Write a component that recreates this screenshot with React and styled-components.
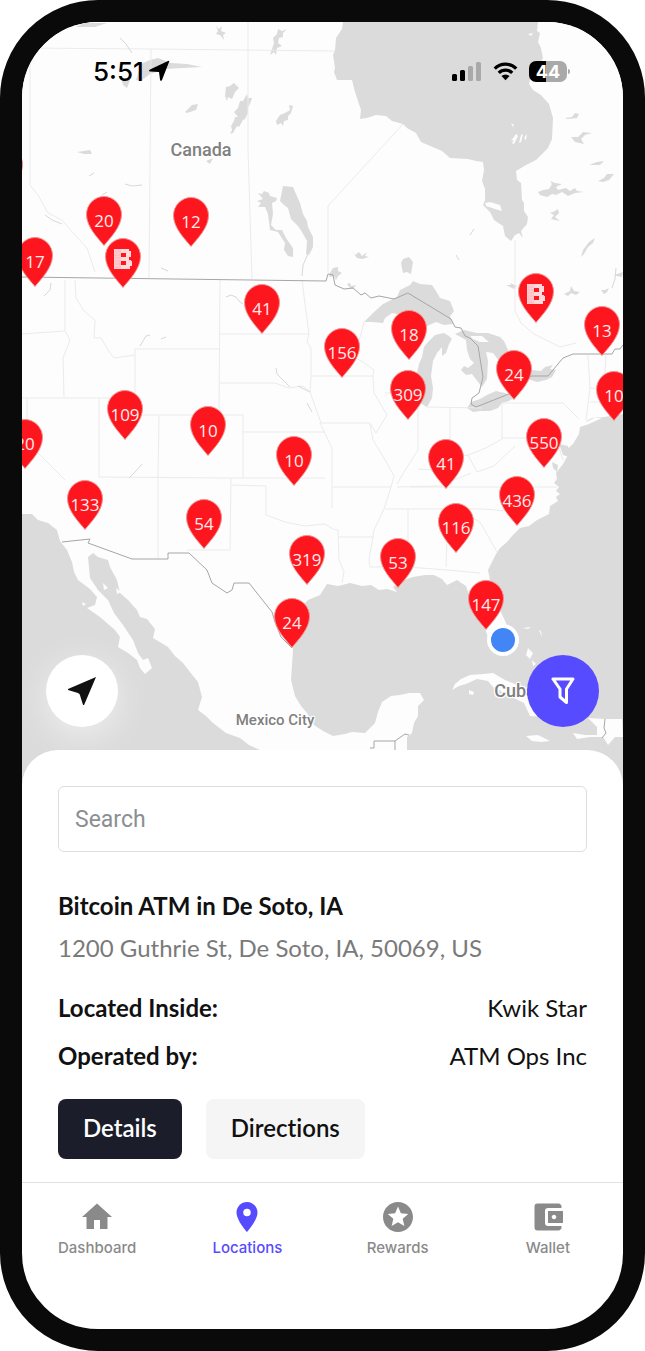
import styled, { createGlobalStyle, css } from "styled-components";
import { MdHome, MdLocationOn, MdStars, MdAccountBalanceWallet } from "react-icons/md";

const MAP = { x: 22, y: 22, width: 601, height: 762 };

// x is the middle of the pin, y is its tip
const pins = [
    { x: 5, y: 196, label: "" },
    { x: 104, y: 246, label: "20" },
    { x: 191, y: 247, label: "12" },
    { x: 35, y: 287, label: "17" },
    { x: 123, y: 288, logo: true },
    { x: 262, y: 334, label: "41" },
    { x: 536, y: 323, logo: true },
    { x: 409, y: 360, label: "18" },
    { x: 602, y: 356, label: "13" },
    { x: 342, y: 378, label: "156" },
    { x: 514, y: 400, label: "24" },
    { x: 408, y: 420, label: "309" },
    { x: 614, y: 421, label: "10" },
    { x: 125, y: 440, label: "109" },
    { x: 208, y: 456, label: "10" },
    { x: 25, y: 469, label: "20" },
    { x: 544, y: 468, label: "550" },
    { x: 294, y: 486, label: "10" },
    { x: 446, y: 489, label: "41" },
    { x: 517, y: 526, label: "436" },
    { x: 85, y: 530, label: "133" },
    { x: 204, y: 549, label: "54" },
    { x: 456, y: 553, label: "116" },
    { x: 307, y: 585, label: "319" },
    { x: 398, y: 588, label: "53" },
    { x: 486, y: 630, label: "147" },
    { x: 292, y: 648, label: "24" },
];

const places = [
    { name: "Canada", x: 201, y: 149, size: 18 },
    { name: "Mexico City", x: 275, y: 720, size: 15 },
    { name: "Cuba", x: 515, y: 690, size: 18 },
];

const tabs = [
    { name: "Dashboard", Icon: MdHome },
    { name: "Locations", Icon: MdLocationOn, active: true },
    { name: "Rewards", Icon: MdStars },
    { name: "Wallet", Icon: MdAccountBalanceWallet },
];

const water = [
    // Hudson Bay and James Bay
    "M343 22 342 29 336 38 335 50 333 55 335 68 334 72 337 80 352 80 355 92 361 110 360 119 367 118 376 115 386 116 392 121 403 124 407 128 416 133 421 142 435 148 442 151 450 158 468 159 476 161 483 162 484 170 482 181 485 189 485 200 483 205 490 212 494 220 503 226 505 236 511 241 515 235 519 233 523 238 521 231 527 224 528 217 524 211 524 203 522 200 521 183 517 180 516 171 526 165 536 160 548 148 552 139 553 118 549 104 541 95 533 90 529 84 531 74 539 66 543 58 541 48 538 42 540 33 537 31 538 22Z",
    // Great Lakes
    "M364 322 373 313 383 304 397 297 400 290 410 285 413 281 420 284 432 285 436 291 440 298 450 301 454 311 450 316 453 324 444 325 436 322 427 326 420 320 408 316 392 313 385 318 383 323 372 322Z",
    "M449 336 444 333 435 335 428 342 424 347 422 357 419 364 417 373 417 388 420 403 427 407 432 398 433 388 431 376 433 361 437 353 442 347 442 356 446 353 449 344 452 339Z",
    "M455 334 466 340 467 350 470 359 474 363 468 368 464 366 461 370 466 375 472 374 478 382 482 387 487 379 488 361 486 352 493 353 499 361 508 365 514 359 508 350 504 341 500 337 488 333 477 333 464 330Z",
    "M467 408 471 402 480 399 487 395 496 391 505 393 515 397 509 401 502 403 498 408 490 411 480 411 473 412Z",
    "M531 370 541 371 545 367 553 365 550 369 556 370 552 377 546 380 537 382 528 379Z",
    // Manitoba
    "M283 186 293 187 296 194 300 203 303 214 307 221 308 227 313 237 313 247 309 255 306 254 307 241 302 232 298 226 291 219 288 208 284 205 280 201Z",
    "M258 193 262 194 264 191 269 193 270 196 277 198 276 201 272 203 273 214 271 225 276 230 282 230 286 238 293 248 293 257 288 256 284 250 285 243 278 232 270 230 268 214 265 207 258 207 261 203 257 201 263 199Z",
    // northern lakes
    "M141 64 150 60 158 58 171 63 187 64 202 67 183 68 165 69 150 74 141 81 136 80Z",
    "M76 27 84 23 107 23 95 27Z M122 81 130 80 127 88 123 85Z M77 152 90 150 92 154 84 154Z M185 112 192 105 198 104 196 110 187 113Z M206 161 213 158 210 164Z",
    "M226 87 230 86 234 83 239 88 235 92 232 99 228 97 227 101 225 96Z M247 94 248 98 252 98 250 104 248 107 248 113 245 119 243 120 239 127 237 126 233 133 230 134 232 130 231 126 234 121 235 117 238 117 234 112 238 108 240 101 243 101Z",
    "M276 121 280 115 285 113 290 110 289 105 293 106 291 113 288 116 288 120 284 121 283 126 281 123 277 125Z M216 26 219 29 222 26 221 31 226 33 223 35 224 40 220 35 216 34 218 31Z",
    "M270 55 274 43 273 38 277 34 278 29 282 31 287 29 283 33 283 37 279 38 278 43 282 46 277 48 276 55 274 52Z",
    "M401 263 403 259 409 257 413 262 411 274 407 272 403 273Z M330 273 333 268 338 267 338 271 342 273 338 276 336 280 334 276 329 277Z M351 250 355 255 359 252 362 256 367 252 365 256 369 257 362 259 357 258Z M347 284 350 283 351 286 356 285 353 289 350 288Z",
    "M565 118 572 117 575 113 579 114 577 118 567 119Z M571 137 578 137 583 132 592 133 585 135 581 139 584 144 575 142Z M589 165 597 162 604 161 600 165Z M598 181 604 178 607 174 614 174 609 180 603 182Z",
    "M538 192 543 190 549 189 552 184 550 181 555 183 562 184 556 187 558 190 566 188 570 191 575 188 577 191 584 192 575 193 568 196 562 192 556 195 552 194 547 197 540 195Z M550 213 555 211 558 209 559 213 555 217 560 221 551 219 554 215Z",
    "M581 257 583 250 589 242 595 238 593 243 588 247 584 254Z M564 294 570 291 571 286 574 291 580 292 576 295 571 293 568 296Z M601 290 605 290 609 288 607 292 604 294Z M506 285 511 285 510 283 517 286 514 289Z M614 275 623 272 622 277 617 276Z",
    // Atlantic and Gulf of Mexico
    "M623 414 604 417 592 418 586 421 589 424 580 427 579 434 573 444 566 450 568 455 563 464 556 473 557 479 554 483 559 487 556 491 560 494 556 497 558 501 550 506 549 514 537 520 529 526 520 528 513 535 507 542 500 548 496 554 492 562 488 570 490 580 496 594 500 610 506 623 508 637 497 644 488 637 483 623 475 608 470 597 466 586 457 580 447 585 442 579 434 575 425 575 413 577 400 581 393 587 397 592 387 589 379 590 371 585 362 586 350 583 338 586 327 584 320 595 308 600 300 608 293 625 292 640 293 650 291 680 295 696 301 706 307 713 314 725 323 731 333 736 345 734 352 732 365 733 375 723 378 712 382 702 391 696 400 695 409 693 420 693 424 700 418 706 418 716 414 723 412 733 407 737 407 784 623 784Z",
    "M559 444 568 446 569 457 563 455Z M552 462 558 465 557 472 553 468Z",
    // Pacific and Gulf of California
    "M22 514 32 514 38 520 48 523 57 530 60 541 67 550 72 562 74 572 78 580 90 589 97 597 95 605 87 608 100 617 108 624 115 630 120 637 118 647 128 653 137 660 140 668 145 674 152 668 148 658 143 660 138 653 133 640 123 625 114 613 108 600 98 590 90 578 88 557 93 553 98 557 108 560 110 567 117 580 120 593 128 600 137 610 140 617 147 619 155 629 153 638 168 647 175 656 183 663 190 672 198 682 202 697 198 710 206 716 213 723 226 733 240 738 249 745 260 750 270 784 22 784Z",
];

const islands = [
    "M452 690 455 684 461 679 470 675 483 674 493 673 505 680 515 684 527 692 537 702 548 712 545 717 530 716 524 703 510 696 493 687 488 681 477 679 466 684 459 686Z",
    "M469 690 474 692 473 695 469 694Z M526 736 538 735 550 741 541 742 532 741Z",
    "M573 733 585 735 597 735 597 727 588 718 605 719 622 719 623 737 615 737 608 745 603 737 590 737 577 739Z",
    "M485 203 490 202 500 205 502 211 495 209 486 206Z M511 141 516 134 518 136 514 144 512 143 514 140Z M519 143 521 135 523 134 521 142Z M524 138 527 134 526 140Z M511 123 514 125 513 127Z",
    "M528 648 533 653 530 659 526 655Z M532 660 536 664 533 666Z M523 628 531 627 528 629Z M539 630 542 637 541 631Z",
    "M470 336 482 336 489 342 480 342 473 339Z M103 583 108 588 104 590Z M116 588 121 592 117 594Z M580 425 594 418 602 418 589 424Z",
    "M82 602 86 604 83 606Z M528 34 533 33 531 36Z",
];

const stateLines = [
    "M22 48 151 49 334 51M30 48V185L38 195 48 213 62 220 75 235 87 248 95 272M151 49 149 278M248 22V150L252 279",
    "M403 124 328 206V273M515 240V311L521 323 534 334 560 347 576 343",
    "M22 334 65 331M65 280V331L70 340 63 358 64 397M75 280 76 298 84 311 95 320 94 338 101 338 108 350 114 358 135 355M135 398V349H219",
    "M22 398H112M27 398V442L65 480M99 399V477L231 478H325M141 415H243V478M159 416 158 477V559",
    "M220 280 219 415M220 334H309M219 383H275L289 388 303 386 310 392 321 423M243 432H325M231 478 230 550H187",
    "M231 485 266 486V515L285 522 305 526 325 524 333 529 338 530 339 560 344 572 342 583",
    "M302 280 304 296 309 334 307 342 311 348V376L310 392M311 376H373L374 370 363 362 354 357 361 334 364 322",
    "M320 423H370L376 433 387 415 374 393 373 376M370 424 373 440 384 458 394 476 391 487H332V448L320 423M332 487V508",
    "M385 393H398M427 407 482 408M418 407V450L404 472 397 484M450 408V457L434 470 418 469M502 403V439L486 448 468 455 450 457",
    "M502 403H563L579 419M502 438H556L563 460M468 455 477 472 494 466 515 446M397 487 440 486 471 473M410 487H557M385 509 484 509 507 511",
    "M391 487 384 509 374 530 369 560 370 567 398 567M408 509V567L447 570 480 573M445 509 447 538 446 567M456 509 480 522 497 552M338 537H374",
    "M588 355 590 388 586 420M606 354 604 390M590 388 609 390M590 402 604 402",
];

const rivers = [
    "M226 297 231 295 236 297 240 302 243 304M276 368 277 374 290 387M298 386 304 389 310 392M307 403 312 412M129 478 135 472 142 464",
    "M161 268 168 271M308 254 303 265 302 276M125 184 132 186 142 185M120 38 126 44 132 53M140 346 146 336 150 335M161 339 166 337M51 283 50 290 44 296",
    "M45 215 52 220 62 224M89 176 94 173M102 195 107 192M616 268 615 279 612 288M470 235 474 229M456 255 459 260",
];

const borders = [
    "M22 277 326 281 328 274 333 275 335 285 344 289 353 288 361 295 365 293 371 298 379 296 394 299 408 293 451 319 455 327 461 328 465 336 470 338 478 346 483 377 479 393 472 398 471 404 476 407 514 392 531 376H548L563 358 573 354H612L615 349 620 349 623 345",
    "M62 542 90 539 88 543 132 559H168V553H189L207 570 212 583 227 593 232 590 234 583H249L272 612 275 622 281 637 292 648",
    "M370 748H374V741H395V750M395 741 405 734 409 735M605 719 604 728 606 733 602 738",
];

const BLogo = () => (
    <LogoSvg viewBox="0 0 20 22">
        <path
            fill="#ffd9db"
            fillRule="evenodd"
            d="M1 1H16V3H18V9H16V12H18V13H19V18H17V21H1ZM8 5V9H13V5ZM8 13V17H13V13Z"
        />
        <path stroke="#ffa5a9" strokeWidth=".5" d="M3 1V21M5 1V21M7 1V21M1 4H8M1 7H8M1 10H8M1 13H8M1 16H8M1 19H8" />
    </LogoSvg>
);

const Pin = ({ x, y, label, logo }) => (
    <PinButton $x={x} $y={y} aria-label={logo || !label ? "ATM location" : undefined}>
        <PinShape viewBox="0 0 36 50">
            <path
                fill="#fe161e"
                stroke="#ef9191"
                strokeWidth="1"
                d="M18 49.500C12 42 .5 31 .5 18.500A17.500 18 0 0 1 35.500 18.500C35.500 31 24 42 18 49.500Z"
            />
        </PinShape>
        {logo ? <BLogo /> : <PinLabel>{label}</PinLabel>}
    </PinButton>
);

const StatusBar = () => (
    <Status>
        <Clock>
            5:51
            <svg width="22" height="22" viewBox="0 0 22 22">
                <path d="M20 1Q22 0 21 2L14 20Q12.500 22 12 19.500L11 12 2 11.500Q0 11 2 9.500Z" />
            </svg>
        </Clock>
        <Signals>
            <svg width="30" height="20" viewBox="0 0 30 20">
                <rect x="0" y="13" width="5" height="7" rx="1.500" />
                <rect x="8" y="9" width="5" height="11" rx="1.500" />
                <rect x="16" y="5" width="5" height="15" rx="1.500" fill="#a9a9a9" />
                <rect x="24" y="1" width="5" height="19" rx="1.500" fill="#a9a9a9" />
            </svg>
            <svg width="25" height="20" viewBox="0 0 26 20">
                <g fill="none" stroke="#000" strokeWidth="3.400">
                    <path d="M1.800 7.500a16 16 0 0 1 22.400 0" />
                    <path d="M6 12a10 10 0 0 1 14 0" />
                </g>
                <path d="M8.800 15.300a6 6 0 0 1 8.400 0L13 19.500Z" />
            </svg>
            <Battery>44</Battery>
        </Signals>
    </Status>
);

const MapView = () => (
    <MapArea>
        <MapSvg viewBox={`${MAP.x} ${MAP.y} ${MAP.width} ${MAP.height}`} aria-hidden="true">
            <g fill="#dbdbdb">
                {water.map((d) => (
                    <path key={d} d={d} />
                ))}
            </g>
            <g fill="#fdfdfd">
                {islands.map((d) => (
                    <path key={d} d={d} />
                ))}
            </g>
            <g fill="none" stroke="#ebebeb">
                {stateLines.map((d) => (
                    <path key={d} d={d} />
                ))}
            </g>
            <g fill="none" stroke="#d8d8d8">
                {rivers.map((d) => (
                    <path key={d} d={d} />
                ))}
            </g>
            <g fill="none" stroke="#a6a6a6">
                {borders.map((d) => (
                    <path key={d} d={d} />
                ))}
            </g>
        </MapSvg>
        {places.map((place) => (
            <Place key={place.name} $x={place.x} $y={place.y} $size={place.size}>
                {place.name}
            </Place>
        ))}
        {pins.map((pin) => (
            <Pin key={`${pin.x}-${pin.y}`} {...pin} />
        ))}
        <Me $x={503} $y={640} />
        <StatusBar />
        <MapControls>
            <RoundButton aria-label="My position">
                <svg width="28" height="28" viewBox="0 0 27 27">
                    <path fill="#111" d="M27 0 15.500 27H14.500L12 19Q11.500 15.500 8 15L0 12.500V11.500Z" />
                </svg>
            </RoundButton>
            <RoundButton $primary aria-label="Filter">
                <svg width="24" height="28" viewBox="0 0 24 28">
                    <path
                        fill="none"
                        stroke="#fff"
                        strokeWidth="3"
                        strokeLinejoin="round"
                        d="M2 2H22L15.500 12V25.500L9 20V12Z"
                    />
                </svg>
            </RoundButton>
        </MapControls>
    </MapArea>
);

const App = () => {
    return (
        <>
            <GlobalStyle />
            <Phone>
                <MapView />
                <Sheet>
                    <Search type="text" placeholder="Search" aria-label="Search" />
                    <Title>Bitcoin ATM in De Soto, IA</Title>
                    <Address>1200 Guthrie St, De Soto, IA, 50069, US</Address>
                    <Facts>
                        <Fact>
                            <dt>Located Inside:</dt>
                            <dd>Kwik Star</dd>
                        </Fact>
                        <Fact>
                            <dt>Operated by:</dt>
                            <dd>ATM Ops Inc</dd>
                        </Fact>
                    </Facts>
                    <Actions>
                        <ActionButton $dark>Details</ActionButton>
                        <ActionButton>Directions</ActionButton>
                    </Actions>
                </Sheet>
                <TabBar>
                    {tabs.map(({ name, Icon, active }) => (
                        <Tab key={name} href="#" $active={active}>
                            <Icon size={36} />
                            {name}
                        </Tab>
                    ))}
                </TabBar>
            </Phone>
        </>
    );
};

export default App;

const GlobalStyle = createGlobalStyle`
  * {
    box-sizing: border-box;
  }
  body {
    margin: 0;
    background: #fff;
  }
  button, input {
    font-family: inherit;
  }
`;

const Phone = styled.main`
  display: flex;
  flex-direction: column;
  min-height: 100vh;
  overflow: hidden;
  border: 22px solid #0a0a0a;
  border-radius: 98px;
  background: #fff;
  color: #111;
  font-family: Lato, "Open Sans", sans-serif;
`;

const MapArea = styled.section`
  position: relative;
  aspect-ratio: 601 / 762;
  overflow: hidden;
  background: #fdfdfd;
`;

const MapSvg = styled.svg`
  display: block;
  width: 100%;
  height: 100%;
`;

// things that stand on the map move with it when it is scaled
const onMap = css`
  position: absolute;
  left: ${({ $x }) => (($x - MAP.x) / MAP.width) * 100}%;
  top: ${({ $y }) => (($y - MAP.y) / MAP.height) * 100}%;
`;

const Place = styled.span`
  ${onMap}
  transform: translate(-50%, -50%);
  color: #808080;
  font-family: Roboto, sans-serif;
  font-size: ${({ $size }) => $size}px;
  font-weight: 500;
  white-space: nowrap;
  text-shadow: 0 0 2px #fff, 1px 1px 1px #fff, -1px -1px 1px #fff, 1px -1px 1px #fff, -1px 1px 1px #fff;
`;

const PinButton = styled.button`
  ${onMap}
  display: flex;
  justify-content: center;
  width: 36px;
  height: 50px;
  padding: 0;
  border: 0;
  background: none;
  transform: translate(-50%, -100%);
`;

const PinShape = styled.svg`
  position: absolute;
  inset: 0;
`;

const PinLabel = styled.span`
  position: relative;
  padding-top: 13px;
  color: #ffeced;
  font-family: "Open Sans", sans-serif;
  font-size: 17px;
  line-height: 24px;
`;

const LogoSvg = styled.svg`
  position: relative;
  width: 20px;
  height: 22px;
  margin-top: 10px;
`;

const Me = styled.span`
  ${onMap}
  width: 32px;
  height: 32px;
  border: 4px solid #fff;
  border-radius: 50%;
  background: #4285f4;
  transform: translate(-50%, -50%);
`;

const Status = styled.header`
  position: absolute;
  top: 33px;
  left: 71px;
  right: 56px;
  display: flex;
  align-items: center;
  justify-content: space-between;
  height: 32px;
`;

const Clock = styled.div`
  display: flex;
  align-items: center;
  gap: 4px;
  color: #000;
  font-family: Inter, sans-serif;
  font-size: 26px;
  font-weight: 500;
`;

const Signals = styled.div`
  display: flex;
  align-items: center;
  gap: 11px;
`;

const Battery = styled.div`
  position: relative;
  width: 38px;
  height: 21px;
  border-radius: 7px;
  background: linear-gradient(90deg, #000 44%, #a9a9a9 44%);
  color: #fff;
  font-family: Inter, sans-serif;
  font-size: 18px;
  font-weight: 700;
  line-height: 21px;
  text-align: center;

  &::after {
    content: "";
    position: absolute;
    left: 39px;
    top: 8px;
    width: 2px;
    height: 5px;
    border-radius: 0 2px 2px 0;
    background: #a9a9a9;
  }
`;

const MapControls = styled.div`
  position: absolute;
  left: 24px;
  right: 24px;
  bottom: 57px;
  display: flex;
  justify-content: space-between;
`;

const RoundButton = styled.button`
  display: flex;
  align-items: center;
  justify-content: center;
  width: 72px;
  height: 72px;
  border: 0;
  border-radius: 50%;
  background: ${({ $primary }) => ($primary ? "#574bff" : "#fff")};
  box-shadow: ${({ $primary }) => ($primary ? "none" : "0 8px 36px rgba(255, 255, 255, 0.6)")};
`;

const Sheet = styled.section`
  position: relative;
  margin-top: -34px;
  padding: 36px 36px 23px;
  border-radius: 36px 36px 0 0;
  background: #fff;
`;

const Search = styled.input`
  display: block;
  width: 100%;
  height: 66px;
  padding: 0 16px;
  border: 1px solid #dedede;
  border-radius: 6px;
  font-family: Roboto, sans-serif;
  font-size: 23px;

  &::placeholder {
    color: #8b8f92;
  }
`;

const Title = styled.h1`
  margin: 39px 0 12px;
  font-size: 24px;
  font-weight: 700;
  line-height: 30px;
`;

const Address = styled.p`
  margin: 0;
  color: #7a7a7a;
  font-size: 24px;
  line-height: 30px;
`;

const Facts = styled.dl`
  display: grid;
  gap: 18px;
  margin: 30px 0 28px;
`;

const Fact = styled.div`
  display: flex;
  justify-content: space-between;
  font-size: 24px;
  line-height: 30px;

  dt {
    font-weight: 700;
  }

  dd {
    margin: 0;
  }
`;

const Actions = styled.div`
  display: flex;
  gap: 24px;
`;

const ActionButton = styled.button`
  height: 60px;
  padding: 0 25px 4px;
  border: 0;
  border-radius: 8px;
  background: ${({ $dark }) => ($dark ? "#1b1e2a" : "#f5f5f5")};
  color: ${({ $dark }) => ($dark ? "#fff" : "#111")};
  font-size: 24px;
  font-weight: 600;
  font-variant-ligatures: none;
`;

const TabBar = styled.nav`
  display: grid;
  grid-template-columns: repeat(4, 1fr);
  flex: 1;
  padding: 16px 0 72px;
  border-top: 1px solid #e2e2e2;
`;

const Tab = styled.a`
  display: flex;
  flex-direction: column;
  align-items: center;
  gap: 4px;
  color: ${({ $active }) => ($active ? "#574bff" : "#8a8a8a")};
  font-family: Inter, sans-serif;
  font-size: 15px;
  font-weight: 500;
  line-height: 18px;
  text-decoration: none;
`;
